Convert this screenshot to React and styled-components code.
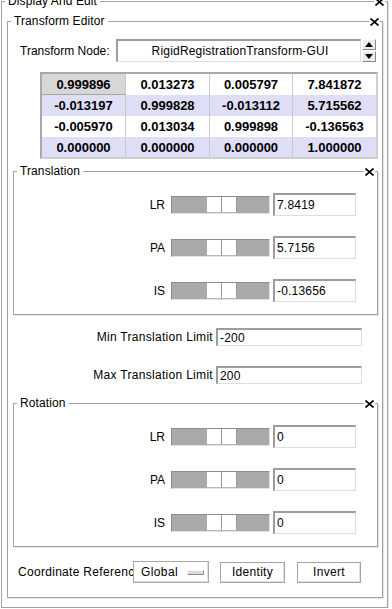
import styled, { createGlobalStyle } from "styled-components";

const GlobalStyle = createGlobalStyle`
    html, body {
        margin: 0;
        padding: 0;
        background: #ffffff;
        overflow: hidden;
    }
    body {
        font-family: "Liberation Sans", Arial, sans-serif;
        font-size: 12px;
        color: #000;
    }
    * {
        box-sizing: border-box;
    }
`;

const Frame = styled.div`
    position: relative;
    display: flex;
    flex-direction: column;
    border: 1px solid #a2a2a2;
    box-shadow: 1px 1px 0 #e4e4e4;
    background: #fff;
`;

const Outer = styled(Frame)`
    margin: 1px 0 0 1px;
    width: 387px;
    height: 607px;
    padding: 19px 4px 9px 5px;
`;

const Editor = styled(Frame)`
    flex: 1;
    padding: 0 4px 0 5px;
`;

const Section = styled(Frame)`
    margin-top: ${(p) => p.$top}px;
    height: 144px;
    padding: 21px 21px 12px 0;
    gap: 20px;
`;

const Title = styled.span`
    position: absolute;
    top: -9px;
    left: 3px;
    padding: 0 3px;
    line-height: 16px;
    font-size: 12px;
    letter-spacing: 0.1px;
    background: #fff;
    white-space: nowrap;
`;

const Close = styled.span`
    position: absolute;
    top: -5px;
    right: 2px;
    width: 11px;
    height: 9px;
    display: flex;
    align-items: center;
    justify-content: center;
    background: #fff;
`;

const NodeRow = styled.div`
    display: flex;
    align-items: center;
    margin-top: 17px;
    padding-left: 7px;
    height: 23px;
`;

const NodeLabel = styled.span`
    width: 96px;
    font-size: 12px;
`;

const Entry = styled.div`
    display: flex;
    align-items: center;
    justify-content: ${(p) => (p.$center ? "center" : "flex-start")};
    width: ${(p) => p.$w}px;
    height: ${(p) => p.$h}px;
    padding-left: 2px;
    border-top: 2px solid #9d9d9d;
    border-left: 2px solid #9d9d9d;
    border-bottom: 1px solid #dddddd;
    border-right: 1px solid #dddddd;
    background: #fff;
    font-size: 12px;
    letter-spacing: 0.2px;
    white-space: nowrap;
`;

const Spinner = styled.div`
    display: flex;
    flex-direction: column;
    margin-left: 1px;
    width: 14px;
    height: 23px;
    gap: 1px;
`;

const SpinButton = styled.div`
    flex: 1;
    display: flex;
    align-items: center;
    justify-content: center;
    background: #ececec;
    border-top: 1px solid #fff;
    border-left: 1px solid #fff;
    border-bottom: 1px solid #8a8a8a;
    border-right: 1px solid #8a8a8a;
`;

const Matrix = styled.div`
    display: grid;
    grid-template-columns: 84px 84px 83px 83px;
    grid-template-rows: 21px 21px 21px 20px;
    margin: 10px 0 0 27px;
    width: 338px;
    height: 87px;
    border-top: 2px solid #a9a9a9;
    border-left: 2px solid #a9a9a9;
    border-bottom: 2px solid #cfcfcf;
    border-right: 2px solid #cfcfcf;
`;

const Cell = styled.div`
    display: flex;
    align-items: center;
    justify-content: center;
    font-weight: bold;
    font-size: 13px;
    background: ${(p) => (p.$selected ? "#d7d7d7" : p.$alt ? "#dedef6" : "#ffffff")};
    border-right: ${(p) => (p.$last ? "none" : "1px solid #c9c9c9")};
    border-bottom: ${(p) => (p.$selected ? "1px solid #a6a6a6" : "none")};
`;

const SliderRow = styled.div`
    display: flex;
    align-items: center;
    justify-content: flex-end;
    height: 23px;
`;

const AxisLabel = styled.span`
    margin-right: 6px;
    font-size: 12px;
`;

const Trough = styled.div`
    display: flex;
    width: 99px;
    height: 18px;
    margin-right: 3px;
    padding-left: 35px;
    background: #a9a9a9;
    border-top: 1px solid #8c8c8c;
    border-left: 1px solid #8c8c8c;
    border-bottom: 1px solid #e2e2e2;
    border-right: 1px solid #e2e2e2;
`;

const ThumbHalf = styled.div`
    width: 15px;
    height: 100%;
    background: #fff;
    border-right: 1px solid #9a9a9a;
    border-bottom: 1px solid #b8b8b8;
`;

const LimitRow = styled.div`
    display: flex;
    align-items: center;
    justify-content: flex-end;
    margin-top: ${(p) => p.$top}px;
    padding-right: 16px;
    height: 18px;
`;

const LimitLabel = styled.span`
    margin-right: 3px;
    font-size: 12px;
    letter-spacing: 0.3px;
`;

const BottomRow = styled.div`
    display: flex;
    align-items: center;
    margin-top: 14px;
    padding-left: 5px;
    height: 22px;
`;

const RefLabel = styled.span`
    width: 115px;
    overflow: hidden;
    white-space: nowrap;
    font-size: 12px;
    letter-spacing: 0.3px;
`;

const MenuButton = styled.div`
    display: flex;
    align-items: center;
    width: 76px;
    height: 22px;
    padding-left: 7px;
    border: 1px solid #a8a8a8;
    box-shadow: inset -1px -1px 0 #e0e0e0;
    font-size: 12px;
    letter-spacing: 0.4px;
`;

const Indicator = styled.span`
    margin-left: auto;
    margin-right: 4px;
    width: 17px;
    height: 5px;
    background: #dcdcdc;
    border-top: 1px solid #f4f4f4;
    border-left: 1px solid #f4f4f4;
    border-bottom: 1px solid #8e8e8e;
    border-right: 1px solid #8e8e8e;
`;

const Button = styled.button`
    display: flex;
    align-items: center;
    justify-content: center;
    margin-left: ${(p) => p.$gap}px;
    width: ${(p) => p.$w}px;
    height: 21px;
    padding: 0;
    background: #fff;
    border: 1px solid #a4a4a4;
    box-shadow: inset -1px -1px 0 #e2e2e2;
    font-family: "Liberation Sans", Arial, sans-serif;
    font-size: 12px;
    letter-spacing: 0.3px;
    color: #000;
`;

function CloseIcon() {
    return (
        <Close>
            <svg width="9" height="8" viewBox="0 0 9 8">
                <path d="M0.5 0.5 L8.5 7.5 M8.5 0.5 L0.5 7.5" stroke="#000" strokeWidth="1.7" />
            </svg>
        </Close>
    );
}

function Arrow({ up }) {
    return (
        <svg width="8" height="5" viewBox="0 0 8 5">
            <path d={up ? "M0 5 L4 0 L8 5 Z" : "M0 0 L8 0 L4 5 Z"} fill="#000" />
        </svg>
    );
}

const matrix = [
    ["0.999896", "0.013273", "0.005797", "7.841872"],
    ["-0.013197", "0.999828", "-0.013112", "5.715562"],
    ["-0.005970", "0.013034", "0.999898", "-0.136563"],
    ["0.000000", "0.000000", "0.000000", "1.000000"],
];

function Slider({ label, value }) {
    return (
        <SliderRow>
            <AxisLabel>{label}</AxisLabel>
            <Trough>
                <ThumbHalf />
                <ThumbHalf />
            </Trough>
            <Entry $w={83} $h={23}>
                {value}
            </Entry>
        </SliderRow>
    );
}

export default function App() {
    return (
        <>
            <GlobalStyle />
            <Outer>
                <Title>Display And Edit</Title>
                <CloseIcon />
                <Editor>
                    <Title>Transform Editor</Title>
                    <CloseIcon />
                    <NodeRow>
                        <NodeLabel>Transform Node:</NodeLabel>
                        <Entry $w={245} $h={23} $center>
                            RigidRegistrationTransform-GUI
                        </Entry>
                        <Spinner>
                            <SpinButton>
                                <Arrow up />
                            </SpinButton>
                            <SpinButton>
                                <Arrow />
                            </SpinButton>
                        </Spinner>
                    </NodeRow>
                    <Matrix>
                        {matrix.map((row, r) =>
                            row.map((v, c) => (
                                <Cell
                                    key={`${r}-${c}`}
                                    $selected={r === 0 && c === 0}
                                    $alt={r % 2 === 1}
                                    $last={c === 3}
                                >
                                    {v}
                                </Cell>
                            ))
                        )}
                    </Matrix>
                    <Section $top={12}>
                        <Title>Translation</Title>
                        <CloseIcon />
                        <Slider label="LR" value="7.8419" />
                        <Slider label="PA" value="5.7156" />
                        <Slider label="IS" value="-0.13656" />
                    </Section>
                    <LimitRow $top={13}>
                        <LimitLabel>Min Translation Limit</LimitLabel>
                        <Entry $w={146} $h={18}>-200</Entry>
                    </LimitRow>
                    <LimitRow $top={20}>
                        <LimitLabel>Max Translation Limit</LimitLabel>
                        <Entry $w={146} $h={18}>200</Entry>
                    </LimitRow>
                    <Section $top={19}>
                        <Title>Rotation</Title>
                        <CloseIcon />
                        <Slider label="LR" value="0" />
                        <Slider label="PA" value="0" />
                        <Slider label="IS" value="0" />
                    </Section>
                    <BottomRow>
                        <RefLabel>Coordinate Reference</RefLabel>
                        <MenuButton>
                            Global
                            <Indicator />
                        </MenuButton>
                        <Button $gap={11} $w={65}>Identity</Button>
                        <Button $gap={12} $w={64}>Invert</Button>
                    </BottomRow>
                </Editor>
            </Outer>
        </>
    );
}
